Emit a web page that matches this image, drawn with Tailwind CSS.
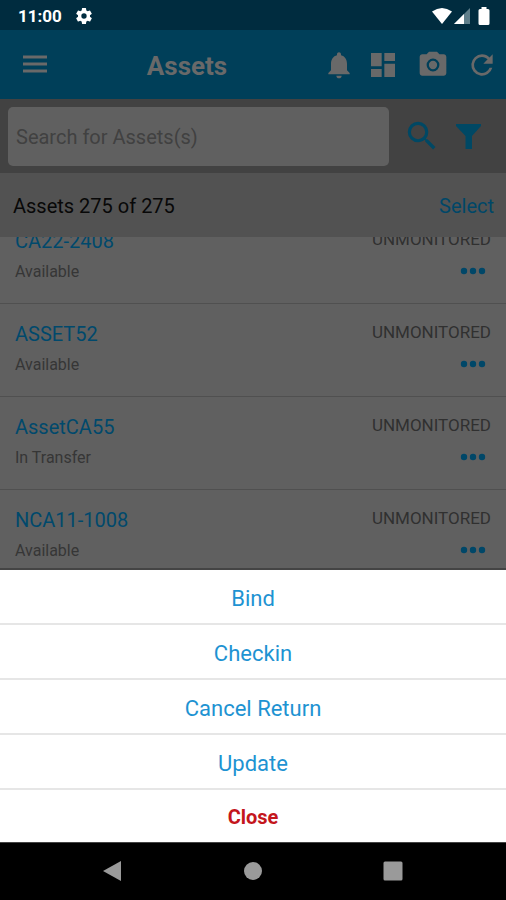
<!DOCTYPE html>
<html lang="en">
<head>
<meta charset="utf-8">
<meta name="viewport" content="width=device-width, initial-scale=1">
<title>Assets</title>
<script src="https://cdn.jsdelivr.net/npm/@tailwindcss/browser@4"></script>
</head>
<body class="bg-black">
<div class="relative flex h-screen flex-col overflow-hidden font-['Roboto',sans-serif]">

  <!-- System status bar -->
  <div class="flex h-[30px] shrink-0 items-center bg-[#002c3f] pt-px pr-4 pl-[18px] text-white">
    <span class="text-[17px] leading-5 font-bold">11:00</span>
    <svg class="ml-3 size-5" viewBox="0 0 24 24" fill="currentColor" aria-hidden="true"><path d="M19.14 12.94c.04-.3.06-.61.06-.94 0-.32-.02-.64-.07-.94l2.03-1.58a.49.49 0 0 0 .12-.61l-1.92-3.32a.49.49 0 0 0-.59-.22l-2.39.96c-.5-.38-1.03-.7-1.62-.94l-.36-2.54a.48.48 0 0 0-.48-.41h-3.84a.47.47 0 0 0-.47.41l-.36 2.54c-.59.24-1.13.57-1.62.94l-2.39-.96a.48.48 0 0 0-.59.22L2.74 8.87a.48.48 0 0 0 .12.61l2.03 1.58c-.05.3-.09.63-.09.94s.02.64.07.94l-2.03 1.58a.49.49 0 0 0-.12.61l1.92 3.32c.12.22.37.29.59.22l2.39-.96c.5.38 1.03.7 1.62.94l.36 2.54c.05.24.24.41.48.41h3.84c.24 0 .44-.17.47-.41l.36-2.54c.59-.24 1.13-.56 1.62-.94l2.39.96c.22.08.47 0 .59-.22l1.92-3.32a.47.47 0 0 0-.12-.61zM12 15.2a3.2 3.2 0 1 1 0-6.4 3.2 3.2 0 0 1 0 6.4z"/></svg>
    <svg class="ml-auto h-4 w-5" viewBox="0 0 20 16" fill="currentColor" aria-hidden="true"><path d="M0 3.500Q10-3.500 20 3.500L10 16z"/></svg>
    <svg class="ml-[2px] size-4" viewBox="0 0 16 16" aria-hidden="true"><path d="M16 0v16H0z" fill="#5f7f8b"/><path d="M10 6v10H0z" fill="#fff"/></svg>
    <svg class="ml-2 h-[18px] w-3" viewBox="0 0 12 18" fill="currentColor" aria-hidden="true"><path d="M3.500 0h5v2H10q1.500 0 1.500 1.500v13Q11.500 18 10 18H2Q.500 18 .500 16.500v-13Q.500 2 2 2h1.500z"/></svg>
  </div>

  <!-- App bar -->
  <header class="flex h-[69px] shrink-0 items-center bg-[#003f59] pr-2 pl-[19px] text-[#696969]">
    <button type="button" aria-label="Menu"><svg class="size-8" viewBox="0 0 32 32" fill="currentColor"><path d="M4 6.500h24v3H4zm0 7h24v3H4zm0 7h24v3H4z"/></svg></button>
    <h1 class="flex-1 pt-[2px] text-center text-[26px] leading-8 font-bold">Assets</h1>
    <nav class="flex items-center" aria-label="Asset tools">
      <button type="button" aria-label="Notifications"><svg class="size-8" viewBox="0 0 24 24" fill="currentColor"><path d="M12 22c1.100 0 2-.900 2-2h-4c0 1.100.890 2 2 2zm6-6v-5c0-3.070-1.640-5.640-4.500-6.320V4c0-.830-.670-1.500-1.500-1.500s-1.500.670-1.500 1.500v.680C7.630 5.360 6 7.920 6 11v5l-2 2v1h16v-1z"/></svg></button>
      <button type="button" aria-label="Dashboard" class="ml-3"><svg class="size-8" viewBox="0 0 24 24" fill="currentColor"><path d="M3 13h8V3H3zm0 8h8v-6H3zm10 0h8V11h-8zm0-18v6h8V3z"/></svg></button>
      <button type="button" aria-label="Scan" class="ml-[18px]"><svg class="size-8" viewBox="0 0 24 24" fill="currentColor" fill-rule="evenodd"><path d="M9 2 7.200 4H4c-1.100 0-2 .900-2 2v12c0 1.100.900 2 2 2h16c1.100 0 2-.900 2-2V6c0-1.100-.900-2-2-2h-3.200L15 2zM12 7.200a4.800 4.800 0 1 1 0 9.600 4.800 4.800 0 0 1 0-9.600zM12 8.900a3.100 3.100 0 1 0 0 6.200 3.100 3.100 0 0 0 0-6.200z"/></svg></button>
      <button type="button" aria-label="Refresh" class="ml-[17px]"><svg class="size-8" viewBox="0 0 24 24" fill="currentColor"><path d="M17.650 6.350A7.960 7.960 0 0 0 12 4a8 8 0 1 0 7.730 10h-2.080A6 6 0 1 1 12 6c1.660 0 3.140.690 4.220 1.780L13 11h7V4z"/></svg></button>
    </nav>
  </header>

  <!-- Search -->
  <form class="flex h-[74px] shrink-0 items-center bg-[#424242] px-2 text-[#004864]">
    <input type="search" aria-label="Search for assets" placeholder="Search for Assets(s)" class="h-[59px] min-w-0 flex-1 rounded-[5px] bg-[#606060] px-2 pt-[2px] text-[20px] text-black placeholder:text-[#414141]">
    <button type="submit" aria-label="Search" class="ml-[14px]"><svg class="size-[38px]" viewBox="0 0 24 24" fill="currentColor"><path d="M15.500 14h-.790l-.280-.270A6.470 6.470 0 0 0 16 9.500 6.500 6.500 0 1 0 9.500 16c1.610 0 3.090-.590 4.230-1.570l.270.280v.790l5 4.990L20.490 19zm-6 0a4.500 4.500 0 1 1 0-9 4.500 4.500 0 0 1 0 9z"/></svg></button>
    <button type="button" aria-label="Filter" class="mr-[17px] ml-[15px]"><svg class="size-[25px]" viewBox="0 0 25 25" fill="currentColor"><path d="M0 0h25v2l-9 10v13H9.500V12L0 2z"/></svg></button>
  </form>

  <div class="flex h-16 shrink-0 items-center justify-between bg-[#525252] pr-3 pl-[13px] text-[20px] leading-6">
    <p class="pt-[2px] text-[#080808]">Assets 275 of 275</p>
    <button type="button" class="pt-[2px] text-[#004768]">Select</button>
  </div>

  <!-- Asset list, scrolled so that the first row sits partly under the count bar -->
  <main class="min-h-0 flex-1 overflow-hidden bg-[#606060]">
    <ul class="-mt-[26px]">
      <li class="flex h-[93px] justify-between border-b border-[#505050] px-[15px] pt-[18px]">
        <div><a href="#" class="block text-[20px] leading-6 text-[#00496c]">CA22-2408</a><p class="mt-[9px] text-[16px] leading-5 text-[#363636]">Available</p></div>
        <div class="flex flex-col items-end text-[#303030]"><span class="text-[17px] leading-5">UNMONITORED</span><button type="button" aria-label="Actions for CA22-2408" class="mt-4 mr-1 text-[#004768]"><svg class="h-3 w-7" viewBox="0 0 28 12" fill="currentColor"><circle cx="5" cy="6" r="3.200"/><circle cx="14" cy="6" r="3.200"/><circle cx="23" cy="6" r="3.200"/></svg></button></div>
      </li>
      <li class="flex h-[93px] justify-between border-b border-[#505050] px-[15px] pt-[18px]">
        <div><a href="#" class="block text-[20px] leading-6 text-[#00496c]">ASSET52</a><p class="mt-[9px] text-[16px] leading-5 text-[#363636]">Available</p></div>
        <div class="flex flex-col items-end text-[#303030]"><span class="text-[17px] leading-5">UNMONITORED</span><button type="button" aria-label="Actions for ASSET52" class="mt-4 mr-1 text-[#004768]"><svg class="h-3 w-7" viewBox="0 0 28 12" fill="currentColor"><circle cx="5" cy="6" r="3.200"/><circle cx="14" cy="6" r="3.200"/><circle cx="23" cy="6" r="3.200"/></svg></button></div>
      </li>
      <li class="flex h-[93px] justify-between border-b border-[#505050] px-[15px] pt-[18px]">
        <div><a href="#" class="block text-[20px] leading-6 text-[#00496c]">AssetCA55</a><p class="mt-[9px] text-[16px] leading-5 text-[#363636]">In Transfer</p></div>
        <div class="flex flex-col items-end text-[#303030]"><span class="text-[17px] leading-5">UNMONITORED</span><button type="button" aria-label="Actions for AssetCA55" class="mt-4 mr-1 text-[#004768]"><svg class="h-3 w-7" viewBox="0 0 28 12" fill="currentColor"><circle cx="5" cy="6" r="3.200"/><circle cx="14" cy="6" r="3.200"/><circle cx="23" cy="6" r="3.200"/></svg></button></div>
      </li>
      <li class="flex h-[93px] justify-between px-[15px] pt-[18px]">
        <div><a href="#" class="block text-[20px] leading-6 text-[#00496c]">NCA11-1008</a><p class="mt-[9px] text-[16px] leading-5 text-[#363636]">Available</p></div>
        <div class="flex flex-col items-end text-[#303030]"><span class="text-[17px] leading-5">UNMONITORED</span><button type="button" aria-label="Actions for NCA11-1008" class="mt-4 mr-1 text-[#004768]"><svg class="h-3 w-7" viewBox="0 0 28 12" fill="currentColor"><circle cx="5" cy="6" r="3.200"/><circle cx="14" cy="6" r="3.200"/><circle cx="23" cy="6" r="3.200"/></svg></button></div>
      </li>
    </ul>
  </main>

  <!-- Action sheet -->
  <div role="dialog" aria-label="Asset actions" class="absolute inset-x-0 bottom-[57px] flex flex-col border-y border-t-2 border-[#444444] bg-white text-[22px] leading-7 text-[#1e93d2]">
    <button type="button" class="h-[55px] border-b-2 border-[#e6e6e6] pt-1">Bind</button>
    <button type="button" class="h-[55px] border-b-2 border-[#e6e6e6] pt-1">Checkin</button>
    <button type="button" class="h-[55px] border-b-2 border-[#e6e6e6] pt-1">Cancel Return</button>
    <button type="button" class="h-[55px] border-b-2 border-[#e6e6e6] pt-1">Update</button>
    <button type="button" class="h-[52px] pt-[2px] text-[20px] font-bold text-[#c4161c]">Close</button>
  </div>

  <!-- System navigation -->
  <nav class="flex h-[58px] shrink-0 items-center justify-center gap-[120px] bg-black text-[#9a9a9a]" aria-label="System">
    <button type="button" aria-label="Back"><svg class="size-5" viewBox="0 0 20 20" fill="currentColor"><path d="M18 0v20L0 10z"/></svg></button>
    <button type="button" aria-label="Home"><svg class="size-5" viewBox="0 0 20 20" fill="currentColor"><circle cx="10" cy="10" r="9"/></svg></button>
    <button type="button" aria-label="Recent apps"><svg class="size-5" viewBox="0 0 20 20" fill="currentColor"><rect x=".5" y=".5" width="19" height="19" rx="1.500"/></svg></button>
  </nav>
</div>
</body>
</html>
